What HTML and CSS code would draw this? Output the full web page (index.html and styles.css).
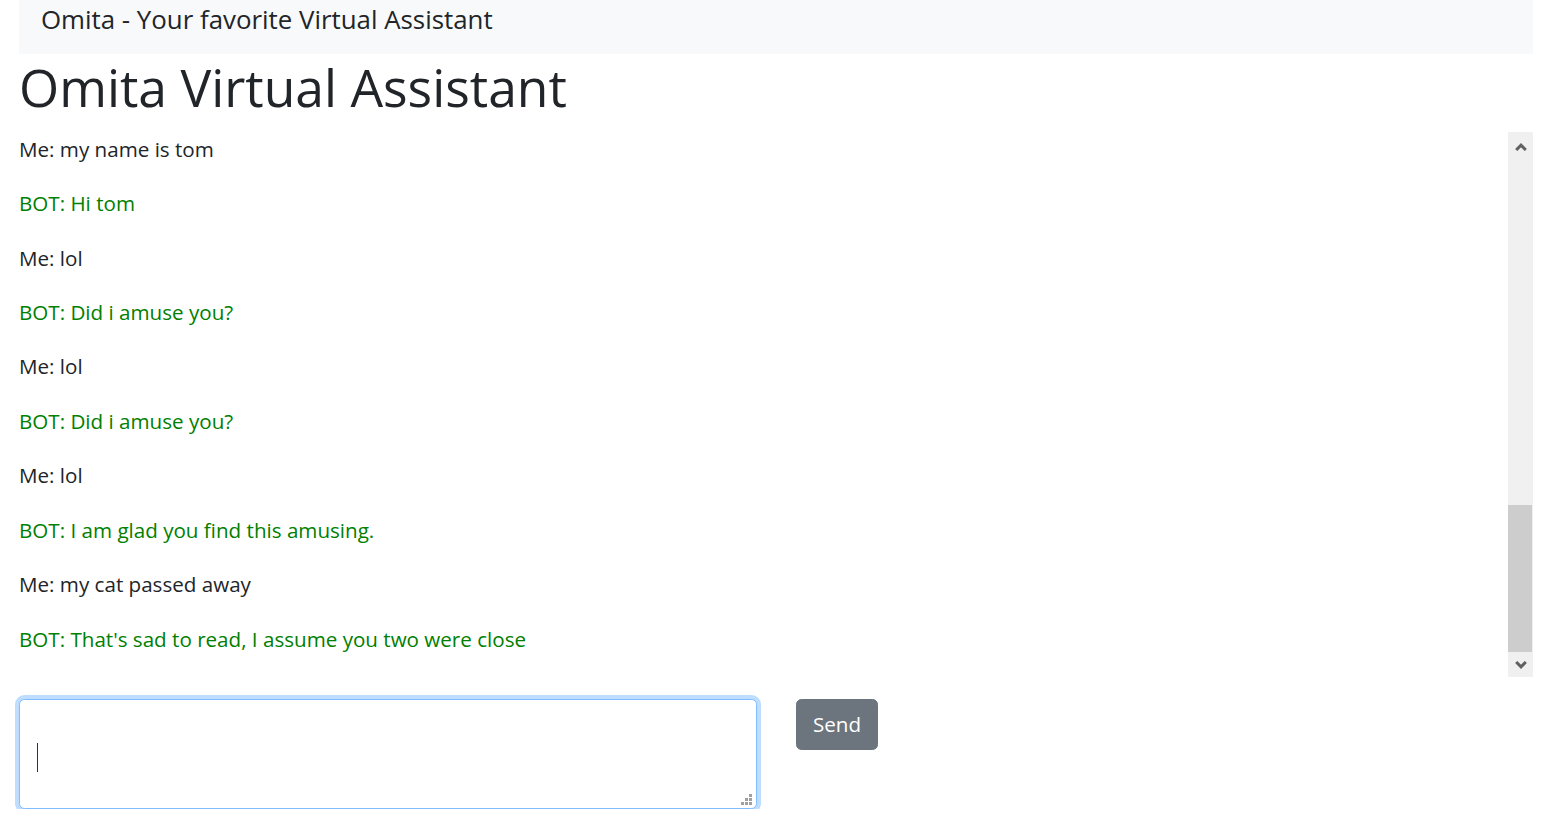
FILE: index.html
```html
<!DOCTYPE html>
<html lang="en">
<head>
<meta charset="utf-8">
<title>Omita</title>
<link rel="stylesheet" href="styles.css">
</head>
<body>
<div class="page">
  <nav class="navbar">
    <span class="brand">Omita - Your favorite Virtual Assistant</span>
  </nav>
  <h1 class="title">Omita Virtual Assistant</h1>
  <div class="chat">
    <div class="viewport">
      <div class="log">
        <p class="msg">Me: my name is tom</p>
        <p class="msg bot">BOT: Hi tom</p>
        <p class="msg">Me: lol</p>
        <p class="msg bot">BOT: Did i amuse you?</p>
        <p class="msg">Me: lol</p>
        <p class="msg bot">BOT: Did i amuse you?</p>
        <p class="msg">Me: lol</p>
        <p class="msg bot">BOT: I am glad you find this amusing.</p>
        <p class="msg">Me: my cat passed away</p>
        <p class="msg bot">BOT: That's sad to read, I assume you two were close</p>
      </div>
    </div>
    <div class="scrollbar" aria-hidden="true">
      <div class="sb-btn sb-up">
        <svg width="12" height="8" viewBox="0 0 12 8"><path d="M1.2 7 L6 2.2 L10.8 7" fill="none" stroke="#606060" stroke-width="3"/></svg>
      </div>
      <div class="sb-track"><div class="sb-thumb"></div></div>
      <div class="sb-btn sb-down">
        <svg width="12" height="8" viewBox="0 0 12 8"><path d="M1.2 1 L6 5.8 L10.8 1" fill="none" stroke="#606060" stroke-width="3"/></svg>
      </div>
    </div>
  </div>
  <form class="composer">
    <div class="input-wrap">
      <textarea class="input" aria-label="Message"></textarea>
      <span class="caret"></span>
    </div>
    <button type="button" class="send">Send</button>
  </form>
</div>
</body>
</html>
```

FILE: styles.css
```css
html, body {
  margin: 0;
  padding: 0;
  background: #fff;
}

body {
  font-family: "Open Sans", "Noto Sans", sans-serif;
  color: #212529;
  font-size: 20.6px;
  line-height: 32.66px;
  overflow: hidden;
}

.page {
  padding: 0 30px 0 19px;
}

.navbar {
  background: #f8f9fa;
  height: 54px;
  padding: 0 22px;
  box-sizing: border-box;
}

.brand {
  display: block;
  font-size: 25.85px;
  line-height: 38px;
  color: #212529;
  white-space: nowrap;
}

.title {
  margin: 0 0 11px;
  font-size: 51.6px;
  font-weight: 400;
  line-height: 67px;
  color: #212529;
}

.chat {
  height: 545px;
  display: flex;
}

.viewport {
  flex: 1;
  min-width: 0;
  overflow: hidden;
  display: flex;
  flex-direction: column;
  justify-content: flex-end;
}

.log {
  flex: none;
}

.msg {
  margin: 0 0 21.77px;
  line-height: 32.66px;
}

.msg.bot {
  color: #008000;
}

.scrollbar {
  flex: none;
  width: 25px;
  background: #f0f0f0;
  display: flex;
  flex-direction: column;
}

.sb-btn {
  flex: none;
  height: 25px;
  box-sizing: border-box;
  display: flex;
  align-items: center;
  justify-content: center;
}

.sb-up {
  padding-top: 4px;
}

.sb-btn svg {
  display: block;
}

.sb-track {
  flex: 1;
  display: flex;
  flex-direction: column;
  justify-content: flex-end;
  padding-right: 1px;
}

.sb-thumb {
  height: 147px;
  background: #cdcdcd;
}

.composer {
  margin: 22px 0 0;
  display: flex;
  align-items: flex-start;
  gap: 39px;
}

.input-wrap {
  position: relative;
  width: 738px;
  height: 110px;
}

.input {
  display: block;
  width: 738px;
  height: 110px;
  box-sizing: border-box;
  margin: 0;
  padding: 8px 16px;
  border: 1.36px solid #80bdff;
  border-radius: 5.4px;
  box-shadow: 0 0 0 4px rgba(0, 123, 255, 0.25);
  outline: none;
  resize: none;
  font: inherit;
  color: #495057;
  background: #fff url("data:image/svg+xml;utf8,<svg xmlns='http://www.w3.org/2000/svg' width='11' height='11'><g fill='%23a0a0a0'><rect x='8' y='0' width='3' height='3'/><rect x='4' y='4' width='3' height='3'/><rect x='8' y='4' width='3' height='3'/><rect x='0' y='8' width='3' height='3'/><rect x='4' y='8' width='3' height='3'/><rect x='8' y='8' width='3' height='3'/></g></svg>") right 4px bottom 3px no-repeat;
}

.caret {
  position: absolute;
  left: 18px;
  top: 44px;
  width: 1px;
  height: 29px;
  background: #333;
}

.send {
  margin: 0;
  height: 51px;
  padding: 0 16px;
  border: 1.36px solid #6c757d;
  border-radius: 5.4px;
  background: #6c757d;
  color: #fff;
  font: inherit;
  line-height: 32.66px;
  cursor: pointer;
}
```
